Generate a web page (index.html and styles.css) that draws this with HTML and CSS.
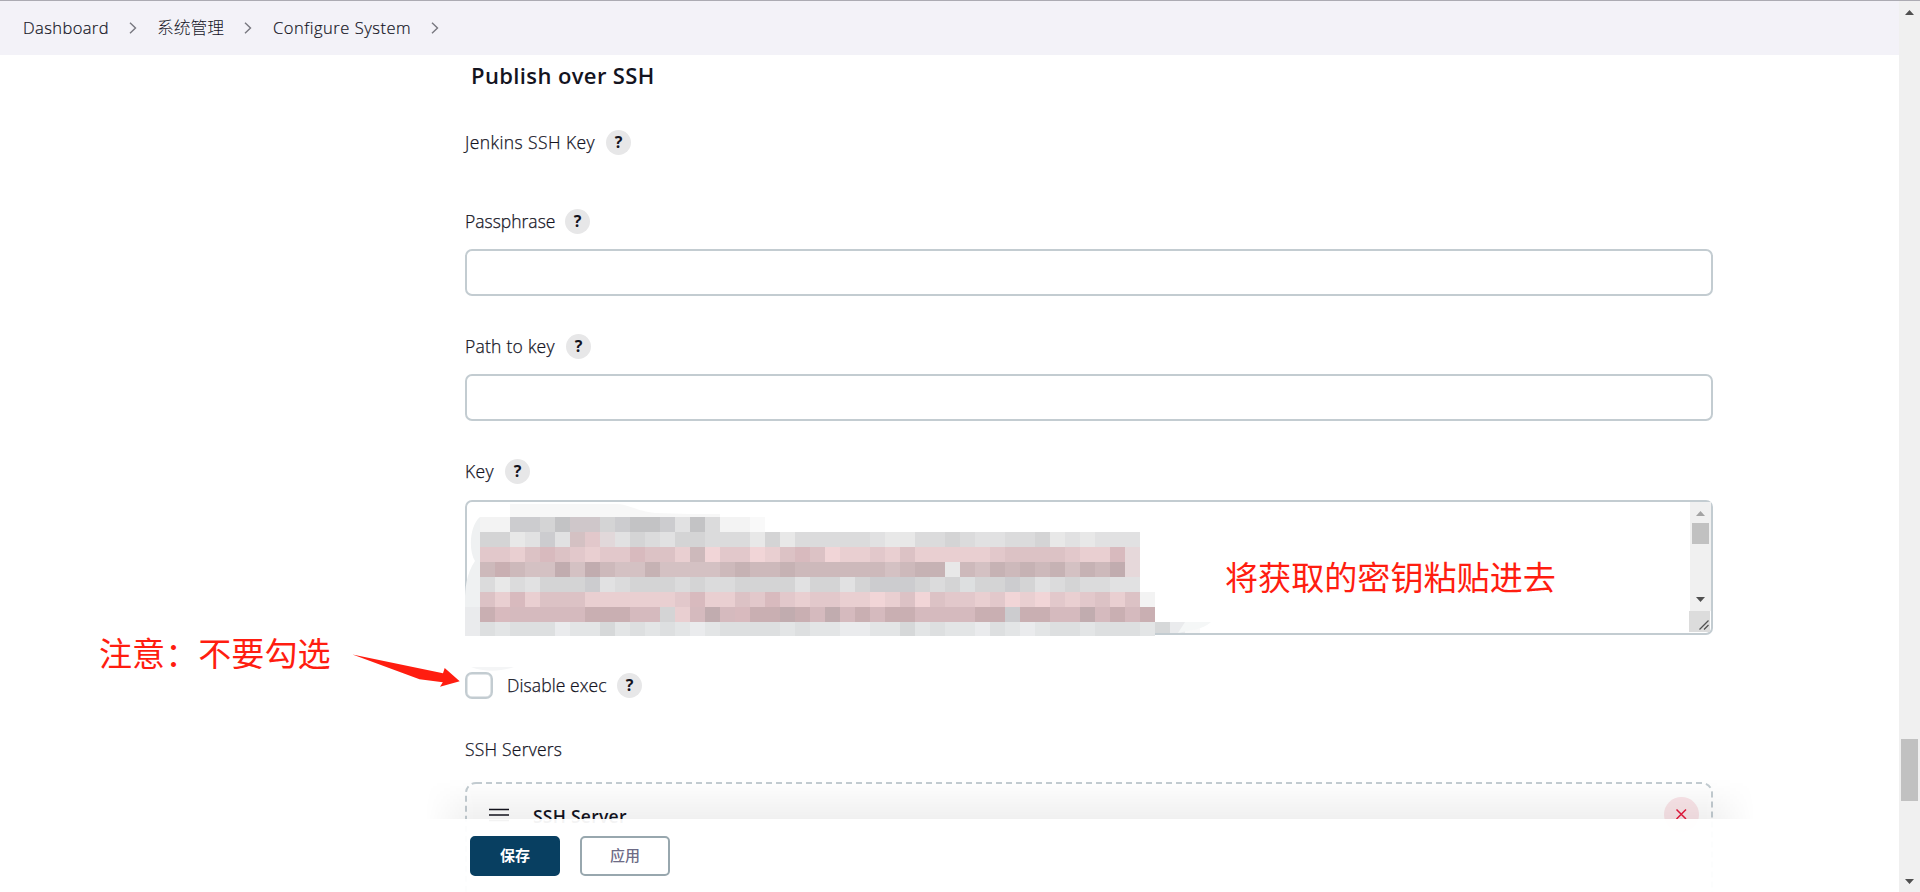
FILE: index.html
```
<!DOCTYPE html>
<html lang="zh">
<head>
<meta charset="utf-8">
<title>Configure System</title>
<link rel="stylesheet" href="styles.css">
</head>
<body>
<div class="window">
  <div class="page">
    <nav class="crumbs">
      <span class="crumb dash">Dashboard</span>
      <svg class="chev" viewBox="0 0 8 12"><path d="M1 .7 6.5 6 1 11.3"/></svg>
      <span class="crumb zh">系统管理</span>
      <svg class="chev" viewBox="0 0 8 12"><path d="M1 .7 6.5 6 1 11.3"/></svg>
      <span class="crumb conf">Configure System</span>
      <svg class="chev" viewBox="0 0 8 12"><path d="M1 .7 6.5 6 1 11.3"/></svg>
    </nav>
    <main class="form">
      <h2 class="title">Publish over SSH</h2>
      <div class="label first"><span class="t-jenkins">Jenkins SSH Key</span><span class="help">?</span></div>
      <div class="label pass"><span class="t-pass">Passphrase</span><span class="help">?</span></div>
      <div class="input"></div>
      <div class="label"><span class="t-path">Path to key</span><span class="help">?</span></div>
      <div class="input"></div>
      <div class="label"><span class="t-key">Key</span><span class="help">?</span></div>
      <div class="textarea">
        <div class="inner-scroll">
          <svg class="bar" viewBox="0 0 21 130">
            <path fill="#f0f0f0" d="M0 0h21v109H0z"/>
            <path fill="#a3a3a3" d="M6 14 10.500 9 15 14z"/>
            <path fill="#c1c1c1" d="M2 21h17v21H2z"/>
            <path fill="#505050" d="M6 95h9l-4.500 5z"/>
            <path fill="#dcdcdc" d="M-1 109h21v21H-1z"/>
            <path stroke="#505050" stroke-width="1.300" fill="none" d="M9.500 127.500 18.500 118.500M14 127.500l4.500-4.500"/>
          </svg>
        </div>
        <svg class="mosaic" id="mosaic" viewBox="465 500 750 172"></svg>
      </div>
      <div class="check"><span class="box"></span><span class="t-exec">Disable exec</span><span class="help">?</span></div>
      <div class="label servers"><span class="t-servers">SSH Servers</span></div>
      <section class="server">
        <svg class="dash-frame" viewBox="0 0 1248 130"><rect x="1" y="1" width="1246" height="160" rx="10"/></svg>
        <svg class="grip" viewBox="0 0 20 14"><path d="M0 1.500h20M0 7h20M0 12.500h20"/></svg>
        <span class="server-name">SSH Server</span>
        <svg class="remove" viewBox="0 0 35 35"><circle cx="17.500" cy="17.500" r="17.500"/><path d="M12.500 12.500l9.500 9.500M22 12.500l-9.500 9.500"/></svg>
      </section>
    </main>
    <div class="shade"></div>
    <footer class="actions">
      <span class="btn primary">保存</span>
      <span class="btn">应用</span>
    </footer>
    <p class="note paste">将获取的密钥粘贴进去</p>
    <p class="note warn">注意：不要勾选</p>
    <svg class="arrow" viewBox="350 650 112 40"><path d="M352.500 654.500 443 673.300 444.700 668 459.700 681.300 440 686.800 442.800 682.200 419.500 679.300z"/></svg>
  </div>
  <svg class="scroll" viewBox="0 0 21 892">
    <path fill="#f0f0f0" d="M0 0h21v892H0z"/>
    <path fill="#505050" d="M6 15 10.500 10 15 15zM6 879h9l-4.500 5z"/>
    <path fill="#c1c1c1" d="M2 739h17v62H2z"/>
  </svg>
</div>
<script src="mosaic.js"></script>
</body>
</html>
```
FILE: styles.css
```
* { box-sizing: border-box; }
body { margin: 0; background: #fff; color: #14141f; font-family: "Open Sans", "Noto Sans CJK SC", sans-serif; }
.window { display: flex; height: 892px; overflow: hidden; position: relative; }
.window::before { content: ""; position: absolute; left: 0; top: 0; width: 100%; height: 1px; background: #acabb3; z-index: 5; }
.page { position: relative; width: 1899px; height: 892px; overflow: hidden; }
.scroll { width: 21px; height: 892px; display: block; }

.crumbs { height: 55px; background: #f3f2f8; padding-left: 23px; display: flex; align-items: center; font-size: 16.5px; font-weight: 300; white-space: nowrap; }
.crumb { height: 24px; line-height: 23px; color: #14141f; -webkit-text-stroke: .2px #14141f; }
.dash { width: 106px; letter-spacing: .4px; }
.zh { margin-left: 20px; width: 87px; font-size: 16.800px; line-height: 24px; -webkit-text-stroke: 0; }
.conf { margin-left: 21px; width: 158px; letter-spacing: .52px; }
.chev { width: 8px; height: 12px; fill: none; stroke: #77777f; stroke-width: 1.400; flex: none; }

.form { margin-left: 465px; width: 1248px; }
.title { margin: 0; padding-left: 6px; height: 75px; line-height: 40px; font-size: 22px; font-weight: 600; letter-spacing: .38px; }
.label { display: flex; align-items: center; height: 25px; font-size: 17.500px; font-weight: 300; gap: 11px; margin-top: 38px; white-space: nowrap; }
.label.first { margin-top: 0; }
.label.pass { margin-top: 54px; }
.label span:first-child, .t-exec { position: relative; top: -1px; -webkit-text-stroke: .25px #14141f; }
.t-jenkins { width: 130px; letter-spacing: .42px; }
.t-pass { width: 89px; }
.t-path { width: 90px; letter-spacing: .25px; }
.t-key { width: 29px; letter-spacing: .4px; }
.help { width: 25px; height: 25px; border-radius: 50%; background: #e7e7e8; font-size: 16px; font-weight: 700; line-height: 25px; text-align: center; flex: none; }
.input { margin-top: 15px; height: 47px; border: 2px solid #c3ccd1; border-radius: 7px; }
.textarea { position: relative; margin-top: 16px; height: 135px; border: 2px solid #c3ccd1; border-radius: 7px; display: flex; justify-content: flex-end; }
.inner-scroll { width: 21px; }
.bar { width: 21px; height: 130px; display: block; overflow: visible; }
.mosaic { position: absolute; left: -2px; top: -2px; width: 750px; height: 172px; }
.check { margin-top: 37px; height: 27px; display: flex; align-items: center; font-size: 17.500px; font-weight: 300; white-space: nowrap; position: relative; }
.box { width: 28px; height: 27px; border: 2px solid #c3ccd1; box-shadow: inset 0 0 0 .5px #c3ccd1; border-radius: 7px; background: #fff; margin-right: 14px; }
.t-exec { width: 110px; letter-spacing: .1px; }
.servers { margin-top: 38px; }
.t-servers { letter-spacing: .22px; }
.server { position: relative; margin-top: 20px; height: 130px; display: flex; align-items: flex-start; }
.dash-frame { position: absolute; left: 0; top: 0; width: 1248px; height: 130px; fill: none; stroke: #c3ccd1; stroke-width: 2; stroke-dasharray: 6 4; }
.grip { width: 20px; height: 14px; margin: 26px 0 0 24px; stroke: #14141f; stroke-width: 1.500; }
.server-name { margin: 21px 0 0 24px; font-size: 17.500px; line-height: 26px; font-weight: 600; flex: 1; letter-spacing: .25px; }
.remove { width: 35px; height: 35px; margin: 15px 14px 0 0; fill: #fae5e9; stroke: none; }
.remove path { stroke: #e6173c; stroke-width: 1.500; }
.shade { position: absolute; left: 425px; top: 779px; width: 1330px; height: 40px; background: linear-gradient(rgba(0,0,0,0), rgba(0,0,0,.06)); -webkit-mask-image: linear-gradient(90deg, transparent, #000 50px, #000 1280px, transparent); }
.actions { position: absolute; left: 425px; top: 819px; width: 1330px; height: 73px; padding: 17px 0 0 45px; display: flex; gap: 20px; background: rgba(255,255,255,.95); }
.btn { width: 90px; height: 40px; border: 2px solid #98a7ae; border-radius: 5px; background: #fff; color: #6d6b86; font-size: 15px; font-weight: 500; line-height: 35px; text-align: center; }
.btn.primary { background: #083f61; border-color: #083f61; color: #fff; font-weight: 700; }
.note { position: absolute; margin: 0; color: #ff1d10; font-family: "Noto Sans CJK SC", sans-serif; font-size: 33.100px; line-height: 40px; font-weight: 400; white-space: nowrap; }
.paste { left: 1225px; top: 556px; }
.warn { left: 99px; top: 632px; }
.arrow { position: absolute; left: 350px; top: 650px; width: 112px; height: 40px; fill: #ff1d10; }
```
FILE: mosaic.js
```
// Pixelated cover over the private key: one letter per 15px cell.
const palette = {
  a: "#f9f9f9", b: "#f3f3f3", c: "#e8e8e8", d: "#e1e1e2", e: "#dbdbdc", f: "#d4d4d5", g: "#cccccf", h: "#c3c3c5",
  p: "#f1d5d7", q: "#e9cfd1", r: "#e2c8cb", s: "#dcc2c5", t: "#d8babe",
  u: "#d4c1c3", v: "#cdb9bb", w: "#c6b2b4", x: "#c1acaf", y: "#d5babe", z: "#c9afb2",
  m: "#e1d8da", n: "#e6d8da", o: "#cfc7ca", i: "#eaebed", j: "#e3e5e6", k: "#dddfe0", l: "#d6d8d9"
};
const rows = [
  [517, 15, ".bbggfhoofghhgdhebba"],
  [532, 15, ".ffcdgdurmdfedffeeecfceeeeedcceefeddeefcdcddd"],
  [547, 15, ".rrqstsrqrrtssqvprrpqstspqqrqsqqqqqrssssrqqtn"],
  [562, 15, ".vzvuuxuxvuuwuuuuvwvvwvvvvvvuvwwcvuwvwvwuwvxn"],
  [577, 15, ".ecedfffgdefffefeeffffdffdfgggfefkffgfdefeeddg"],
  [592, 15, ".sqtqsssqqqqqqrtqqsrtrqrrqqpqspsrrqrpqprqrsqsb"],
  [607, 15, "iztyyyyyzzzyyfqyxytzzxzyxyzyzzyyyyzzgzzyyxyzyz"],
  [622, 14, "ikjkkkijjljkjkjijkkkkjkjjiijjljkjjikjijkkjkkkjlia"]
];
const at = (x, y, w, h, c) => `<rect x="${x}" y="${y}" width="${w}" height="${h}" fill="${c}"/>`;
let out = '<path fill="#eff1f2" d="M480 517C470 525 468 550 475 561C466 574 465 590 465 600V636H572V517z"/>';
out += '<path fill="#f7f7f7" d="M510 504H617C630 505 637 511 655 513L690 514H720V518H510z"/>';
for (const [y, h, cells] of rows) {
  [...cells.slice(0, y === 577 ? 45 : 60)].forEach((ch, i) => {
    if (palette[ch]) out += at(465 + i * 15, y, 15, y === 622 && i > 45 ? 11 : h, palette[ch]);
  });
}
out += '<path fill="#f5f7f7" d="M1185 622H1211C1202 630 1190 630 1178 633z"/>';
out += '<path fill="#f4f5f6" d="M471 667H514C500 672 484 672 471 667z"/>';
document.getElementById("mosaic").innerHTML = out;
```
